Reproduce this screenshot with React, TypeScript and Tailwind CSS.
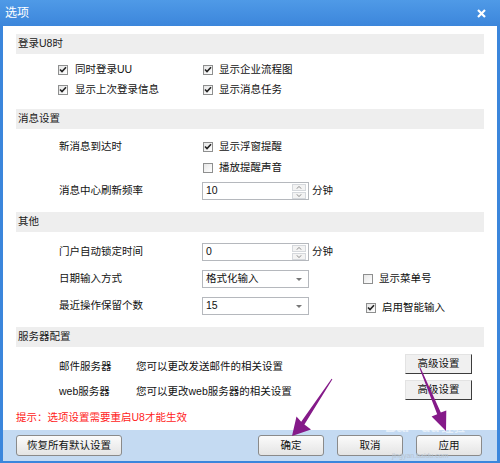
import React from 'react';

const font = { fontFamily: '"Liberation Sans", "Noto Sans CJK SC", sans-serif' };

// small 10px checkbox in the old Windows style
const Check = ({ checked }: { checked?: boolean }) => (
  <span className="w-[10px] h-[10px] border border-[#8e8f8f] bg-gradient-to-br from-[#e6e6e6] to-white flex items-center justify-center shrink-0">
    {checked && (
      <svg width="8" height="8" viewBox="0 0 8 8">
        <path d="M1 3.5 L3 5.5 L7 1.2" stroke="#222" strokeWidth="1.6" fill="none" />
      </svg>
    )}
  </span>
);

const CheckLabel = ({ checked, label, gap = 'gap-[7px]' }: { checked?: boolean; label: string; gap?: string }) => (
  <div className={`flex items-center ${gap}`}>
    <Check checked={checked} />
    <span>{label}</span>
  </div>
);

const SectionHeader = ({ title }: { title: string }) => (
  <div className="h-[20px] bg-[#eeeeee] flex items-center pl-[2px] text-[#1a1a1a]">{title}</div>
);

const Spinner = ({ value }: { value: string }) => (
  <div className="flex items-center">
    <div className="w-[107px] h-[18px] border border-[#b5b8bd] bg-white flex items-center pl-[3px] pr-[2px] justify-between">
      <span>{value}</span>
      <div className="flex flex-col gap-[1px]">
        <span className="w-[14px] h-[7px] border border-[#d5d8dc] bg-[#f3f3f3] flex items-center justify-center">
          <svg width="6" height="3" viewBox="0 0 6 3"><path d="M0.5 2.8 L3 0.5 L5.5 2.8" stroke="#7a7a7a" fill="none" strokeWidth="0.8" /></svg>
        </span>
        <span className="w-[14px] h-[7px] border border-[#d5d8dc] bg-[#f3f3f3] flex items-center justify-center">
          <svg width="6" height="3" viewBox="0 0 6 3"><path d="M0.5 0.2 L3 2.5 L5.5 0.2" stroke="#7a7a7a" fill="none" strokeWidth="0.8" /></svg>
        </span>
      </div>
    </div>
    <span className="ml-[3px]">分钟</span>
  </div>
);

const Select = ({ value }: { value: string }) => (
  <div className="w-[107px] h-[18px] border border-[#b5b8bd] bg-white flex items-center pl-[3px] pr-[6px] justify-between">
    <span>{value}</span>
    <svg width="6" height="3" viewBox="0 0 6 3"><path d="M0 0 L6 0 L3 3 Z" fill="#777" /></svg>
  </div>
);

const ClassicButton = ({ label }: { label: string }) => (
  <div className="w-[67px] h-[20px] bg-[#f0f0f0] border border-t-[#e3e3e3] border-l-[#e3e3e3] border-b-[#3c3c3c] border-r-[#3c3c3c] flex items-center justify-center">
    {label}
  </div>
);

const FooterButton = ({ label, w }: { label: string; w: string }) => (
  <div className={`${w} h-[21px] rounded-[3px] border border-[#8a8a8a] bg-gradient-to-b from-[#fbfbfb] to-[#e4e4e4] flex items-center justify-center text-[#111]`}>
    {label}
  </div>
);

export default function App() {
  return (
    <div className="relative w-[500px] h-[463px] bg-[#3b86dc] flex flex-col text-[10.5px] text-[#111]" style={font}>
      {/* title bar */}
      <div className="h-[26px] bg-gradient-to-b from-[#4f9ae7] to-[#3c86db] flex items-center justify-between pl-[5px] pr-[14px] text-white text-[12px]">
        <span>选项</span>
        <svg width="9" height="9" viewBox="0 0 9 9">
          <path d="M1 1 L8 8 M8 1 L1 8" stroke="white" strokeWidth="2.2" />
        </svg>
      </div>

      <div className="mx-[3px] bg-white flex-1 flex flex-col">
        <div className="px-[13px] pt-[8px]">
          {/* 登录U8时 */}
          <SectionHeader title="登录U8时" />
          <div className="pt-[6px] pb-[9px] pl-[42px]">
            <div className="h-[20px] flex items-center">
              <div className="w-[145px]"><CheckLabel checked label="同时登录UU" /></div>
              <CheckLabel checked label="显示企业流程图" gap="gap-[6px]" />
            </div>
            <div className="h-[20px] flex items-center">
              <div className="w-[145px]"><CheckLabel checked label="显示上次登录信息" /></div>
              <CheckLabel checked label="显示消息任务" gap="gap-[6px]" />
            </div>
          </div>

          {/* 消息设置 */}
          <SectionHeader title="消息设置" />
          <div className="pt-[8px] pb-[11px] pl-[43px]">
            <div className="h-[20px] flex items-center">
              <span className="w-[144px]">新消息到达时</span>
              <CheckLabel checked label="显示浮窗提醒" gap="gap-[6px]" />
            </div>
            <div className="h-[20px] flex items-center mt-[1px]">
              <span className="w-[144px]"></span>
              <CheckLabel label="播放提醒声音" gap="gap-[6px]" />
            </div>
            <div className="h-[20px] flex items-center mt-[3px]">
              <span className="w-[143px]">消息中心刷新频率</span>
              <Spinner value="10" />
            </div>
          </div>

          {/* 其他 */}
          <SectionHeader title="其他" />
          <div className="pt-[10px] pb-[11px] pl-[43px] flex flex-col gap-[7px]">
            <div className="h-[20px] flex items-center">
              <span className="w-[143px]">门户自动锁定时间</span>
              <Spinner value="0" />
            </div>
            <div className="h-[20px] flex items-center">
              <span className="w-[143px]">日期输入方式</span>
              <Select value="格式化输入" />
              <div className="ml-[54px]"><CheckLabel label="显示菜单号" gap="gap-[6px]" /></div>
            </div>
            <div className="h-[20px] flex items-center">
              <span className="w-[143px]">最近操作保留个数</span>
              <Select value="15" />
              <div className="ml-[57px] mt-[4px]"><CheckLabel checked label="启用智能输入" gap="gap-[6px]" /></div>
            </div>
          </div>

          {/* 服务器配置 */}
          <SectionHeader title="服务器配置" />
          <div className="pt-[7px] pl-[43px] flex flex-col gap-[6px]">
            <div className="h-[20px] flex items-center">
              <span className="w-[77px] mt-[6px]">邮件服务器</span>
              <span className="flex-1 mt-[6px]">您可以更改发送邮件的相关设置</span>
              <div className="mr-[12px]"><ClassicButton label="高级设置" /></div>
            </div>
            <div className="h-[20px] flex items-center">
              <span className="w-[77px] mt-[3px]">web服务器</span>
              <span className="flex-1 mt-[3px]">您可以更改web服务器的相关设置</span>
              <div className="mr-[12px]"><ClassicButton label="高级设置" /></div>
            </div>
          </div>
          <div className="mt-[10px] text-[#ff1a1a]">提示：选项设置需要重启U8才能生效</div>
        </div>

        {/* footer */}
        <div className="mt-auto h-[31px] bg-[#c4daf2] flex items-center pl-[13px] pr-[15px]">
          <FooterButton label="恢复所有默认设置" w="w-[106px]" />
          <div className="ml-auto flex gap-[13px]">
            <FooterButton label="确定" w="w-[66px]" />
            <FooterButton label="取消" w="w-[66px]" />
            <FooterButton label="应用" w="w-[66px]" />
          </div>
        </div>
      </div>
      <div className="h-[2px]" />

      {/* watermark */}
      <div className="absolute left-[385px] top-[419px] text-white opacity-60 pointer-events-none leading-none">
        <div className="text-[16px] font-bold tracking-tight" style={{ fontFamily: '"Liberation Sans", sans-serif' }}>
          Bai<span className="ml-[12px]">du</span>
          <span className="text-[12px] ml-[2px]" style={{ fontFamily: '"Noto Sans CJK SC", sans-serif' }}>经验</span>
        </div>
      </div>
      <div className="absolute left-[392px] top-[452px] text-[7px] leading-none text-[#b8c4d0] pointer-events-none">jingyan.baidu.com</div>

      {/* purple annotation arrows */}
      <svg className="absolute left-0 top-0 pointer-events-none" width="500" height="463" viewBox="0 0 500 463">
        <polygon
          points="332.4,379.3 304.4,424.6 311,429.4 292,436 296.5,416.5 301.2,421.8 331.6,378.7"
          fill="#851a89"
        />
        <polygon
          points="420.5,367.8 440.8,412.6 446.3,410.4 446,431 431.6,416.4 437.2,414.2 419.5,368.2"
          fill="#851a89"
        />
      </svg>
    </div>
  );
}
